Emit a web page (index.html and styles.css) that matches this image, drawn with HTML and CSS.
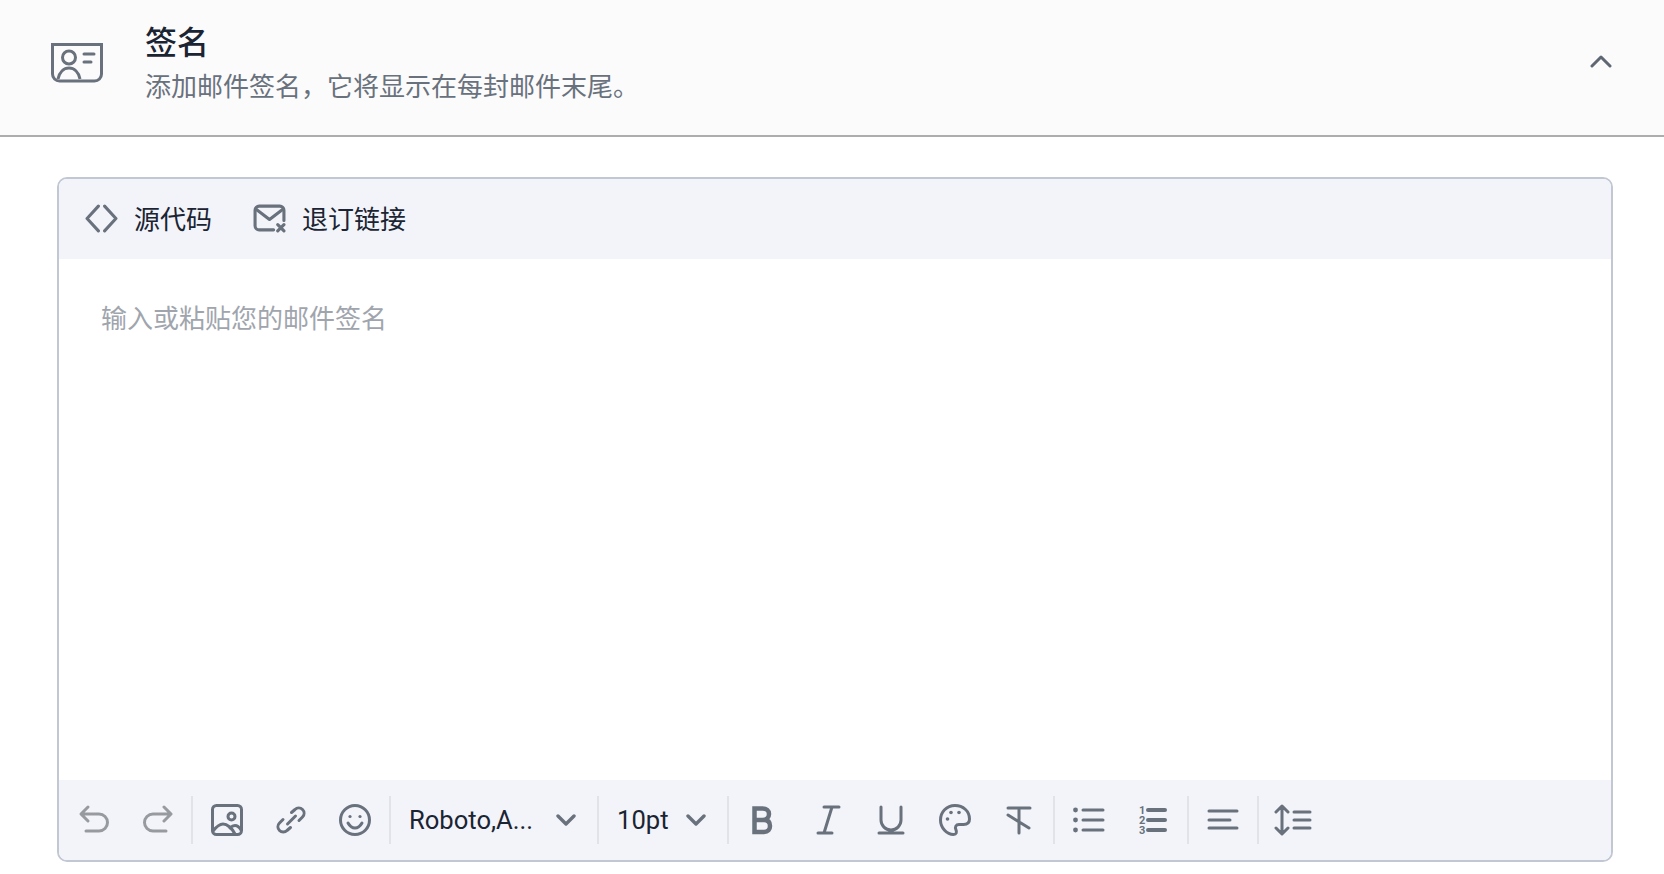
FILE: index.html
```html
<!DOCTYPE html>
<html lang="zh">
<head>
<meta charset="utf-8">
<title>签名</title>
<link rel="stylesheet" href="styles.css">
</head>
<body>
<header class="head">
  <svg class="head-icon" viewBox="0 0 52 40" fill="none" stroke="currentColor" stroke-width="3">
    <path d="M1.500 1.500H50.500V31a7 7 0 0 1-7 7H8.500a7 7 0 0 1-7-7Z"/>
    <circle cx="18" cy="14.500" r="6.500"/>
    <path d="M7 36c1.500-7 6-11 11-11s9.500 4 11 11"/>
    <path d="M33 11h10M33 19h7" stroke-linecap="round"/>
  </svg>
  <div class="head-text">
    <div class="head-title">签名</div>
    <div class="head-sub">添加邮件签名，它将显示在每封邮件末尾。</div>
  </div>
  <svg class="head-chev" viewBox="0 0 22 14" fill="none" stroke="currentColor" stroke-width="3" stroke-linecap="round" stroke-linejoin="round">
    <path d="M2 12 11 3l9 9"/>
  </svg>
</header>
<main class="editor">
  <div class="top-bar">
    <div class="top-btn">
      <svg class="top-icon" viewBox="0 0 32 28" fill="none" stroke="currentColor" stroke-width="3" stroke-linecap="round" stroke-linejoin="round"><path d="M13 2 2 14l11 12M19 2l11 12-11 12"/></svg>
      <span class="top-label">源代码</span>
    </div>
    <div class="top-btn">
      <svg class="top-icon" viewBox="0 0 32 28" fill="none" stroke="currentColor" stroke-width="3" stroke-linecap="round" stroke-linejoin="round"><path d="M20 25H6a4 4 0 0 1-4-4V6a4 4 0 0 1 4-4h20a4 4 0 0 1 4 4v10"/><path d="m3 5 13 10L29 5"/><path d="m24 20 6 6M30 20l-6 6"/></svg>
      <span class="top-label">退订链接</span>
    </div>
  </div>
  <div class="body"><span class="placeholder">输入或粘贴您的邮件签名</span></div>
  <div class="bottom-bar">
    <div class="tool dim"><svg viewBox="0 0 32 32"><path d="M11 3 4 10l7 7M5 10h17a8 8 0 0 1 0 17H9"/></svg></div>
    <div class="tool dim"><svg viewBox="0 0 32 32"><path d="m23 3 7 7-7 7M29 10H12a8 8 0 0 0 0 17h13"/></svg></div>
    <div class="sep"></div>
    <div class="tool"><svg viewBox="0 0 32 32"><rect x="1.500" y="1.500" width="29" height="29" rx="4"/><circle cx="20.500" cy="12.500" r="3.500"/><path d="M2 27c4-5 7-7 10-7 4 0 9 4 12 10M19 24c1.500-1.500 3-2.500 5-2.500 2.500 0 4.500 2 6 4.500"/></svg></div>
    <div class="tool"><svg viewBox="0 0 32 32"><path d="M16.500 8.500l3.500-3a5.200 5.200 0 0 1 7.500 7.500L24 16.500M8 15.500l-3.500 3.500a5.200 5.200 0 0 0 7.500 7.500L15.500 23.500M12.500 20l8-8"/></svg></div>
    <div class="tool"><svg viewBox="0 0 32 32"><circle cx="16" cy="16" r="14.500"/><circle class="fill" cx="11" cy="12.500" r="1.600"/><circle class="fill" cx="21" cy="12.500" r="1.600"/><path d="M9 19c2 3.500 4.500 5 7 5s5-1.500 7-5"/></svg></div>
    <div class="sep"></div>
    <div class="select font-select"><span>Roboto,A...</span><svg class="chev" viewBox="0 0 20 12"><path d="M2 2l8 8 8-8"/></svg></div>
    <div class="sep"></div>
    <div class="select size-select"><span>10pt</span><svg class="chev" viewBox="0 0 20 12"><path d="M2 2l8 8 8-8"/></svg></div>
    <div class="sep"></div>
    <div class="tool"><svg viewBox="0 0 32 32" class="bold"><path d="M7.500 4.500h8c4 0 6.500 2 6.500 5.500s-2.500 6-6.500 6h-8Zm0 11.500h9.500c4.500 0 6 2.500 6 6s-2 6-6 6H7.500Z"/></svg></div>
    <div class="tool"><svg viewBox="0 0 32 32"><path d="M13 3h15M21 3l-8 26M7 29h14"/></svg></div>
    <div class="tool"><svg viewBox="0 0 32 32"><path d="M6 3v13a10 10 0 0 0 20 0V3M4 29h24"/></svg></div>
    <div class="tool"><svg viewBox="0 0 32 32"><path d="M16 1.500C7.500 1.500 1.500 8 1.500 16c0 8 6.500 14.500 13 14.500 3 0 3.500-2.500 2.500-4.500-1.500-3 0-5.500 3-5.500h4.500c4 0 6-2 6-5.500C30.500 7 24 1.500 16 1.500Z"/><circle class="fill" cx="8.500" cy="15" r="1.800"/><circle class="fill" cx="12" cy="8.500" r="1.800"/><circle class="fill" cx="20" cy="8.500" r="1.800"/></svg></div>
    <div class="tool"><svg viewBox="0 0 32 32"><path d="M5 4h22M16 4v25M5 11l21 13"/></svg></div>
    <div class="sep"></div>
    <div class="tool"><svg viewBox="0 0 32 32"><circle class="fill" cx="2.500" cy="6" r="2.400"/><circle class="fill" cx="2.500" cy="16" r="2.400"/><circle class="fill" cx="2.500" cy="26" r="2.400"/><path d="M10 6h20M10 16h20M10 26h20"/></svg></div>
    <div class="tool"><svg viewBox="0 0 32 32" class="num"><text class="num-text" x="2" y="10">1</text><text class="num-text" x="2" y="20">2</text><text class="num-text" x="2" y="30">3</text><path d="M11 6h17M11 16h17M11 26h17"/></svg></div>
    <div class="sep"></div>
    <div class="tool"><svg viewBox="0 0 32 32"><path d="M2 7h28M2 16h21M2 24h28"/></svg></div>
    <div class="sep"></div>
    <div class="tool"><svg class="lh" viewBox="0 0 38 32"><path d="M8 2v27M2 8l6-6 6 6M2 24l6 6 6-6M20 8h16M20 16h16M20 24h16"/></svg></div>
  </div>
</main>
</body>
</html>
```
FILE: styles.css
```css
* { box-sizing: border-box; }
html, body { margin: 0; padding: 0; height: 100%; background: #fff; overflow: hidden; }
body { font-family: Roboto, "Noto Sans CJK SC", sans-serif; color: #1b2433; }

.head {
  display: flex;
  align-items: center;
  height: 137px;
  padding: 0 52px 6px 51px;
  background: #fbfbfc;
  border-bottom: 2px solid #adadad;
}
.head-icon { width: 52px; height: 40px; color: #69717c; flex: none; margin-bottom: 3px; }
.head-text { flex: 1; margin-left: 42px; }
.head-title { font-size: 32px; line-height: 40px; font-weight: 500; color: #1b2433; }
.head-sub { font-size: 26px; line-height: 38px; color: #69717c; margin-top: 5px; }
.head-chev { width: 22px; height: 14px; color: #5f6773; flex: none; margin-bottom: 8px; }

.editor {
  display: flex;
  flex-direction: column;
  width: 1556px;
  height: 685px;
  margin: 40px 0 0 57px;
  border: 2px solid #c1c8d4;
  border-radius: 10px;
  overflow: hidden;
  background: #fff;
}

.top-bar {
  display: flex;
  align-items: center;
  gap: 41px;
  height: 80px;
  flex: none;
  padding: 0 0 1px 26px;
  background: #f2f4f9;
  font-size: 26px;
}
.top-btn { display: flex; align-items: center; gap: 16px; color: #1b2433; }
.top-label { position: relative; top: -1px; }
.top-icon { width: 33px; height: 29px; color: #69717c; flex: none; }

.body { flex: 1; padding: 41px 42px; }
.placeholder { font-size: 26px; line-height: 38px; color: #a0a5ad; }

.bottom-bar {
  display: flex;
  align-items: center;
  height: 80px;
  flex: none;
  padding-left: 2px;
  background: #f2f4f9;
}
.tool {
  display: flex;
  align-items: center;
  justify-content: center;
  width: 64px;
  height: 48px;
  flex: none;
  color: #69717c;
}
.tool.dim { color: #979a9f; }
.tool svg { width: 32px; height: 32px; fill: none; stroke: currentColor; stroke-width: 3; stroke-linecap: round; stroke-linejoin: round; }
.tool svg .fill { fill: currentColor; stroke: none; }
.tool svg.bold { stroke-width: 4.5; stroke-linecap: butt; stroke-linejoin: miter; }
.tool svg.lh { width: 38px; }
.tool svg.num path { stroke-width: 4; }
.num-text { font-family: Roboto, sans-serif; font-size: 11px; font-weight: 700; fill: currentColor; stroke: none; }

.sep { width: 2px; height: 48px; margin: 0 2px; background: #e1e3e8; flex: none; }

.select {
  display: flex;
  align-items: center;
  justify-content: space-between;
  height: 48px;
  flex: none;
  padding: 0 19px 0 16px;
  font-size: 25.6px;
  color: #1b2433;
}
.font-select { width: 202px; }
.size-select { width: 124px; }
.chev { width: 20px; height: 12px; fill: none; stroke: #69717c; stroke-width: 3.4; stroke-linecap: round; stroke-linejoin: round; flex: none; }
```
